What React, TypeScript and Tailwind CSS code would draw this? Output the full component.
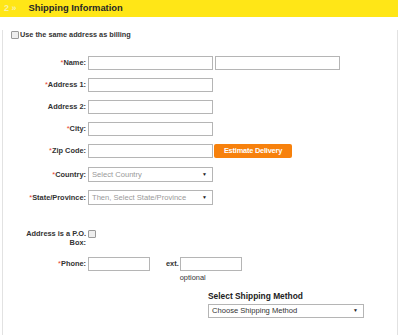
import React from 'react';

const font = { fontFamily: '"Liberation Sans", Arial, sans-serif' };

function Req() {
  return <span className="text-[#e8412c] font-normal">*</span>;
}

function Box() {
  return <div className="w-[8px] h-[8px] border border-[#9a9a9a] bg-[#eeeeee] rounded-[1px]" />;
}

function Field({ label, req, children, className = '' }: { label: string; req?: boolean; children: React.ReactNode; className?: string }) {
  return (
    <div className={`flex items-center ${className}`}>
      <div className="w-[83px] text-right font-bold text-[7.4px] text-[#333]">
        {req && <Req />}
        {label}
      </div>
      <div className="ml-[2px] flex items-center">{children}</div>
    </div>
  );
}

function Input({ w }: { w: string }) {
  return <div className={`${w} h-[14px] border border-[#b5b5b5] bg-white`} />;
}

function Select({ w, text }: { w: string; text: string }) {
  return (
    <div className={`${w} h-[15px] border border-[#b5b5b5] bg-white flex items-center justify-between pl-[3px] pr-[5px]`}>
      <span className="text-[7.6px] text-[#999]">{text}</span>
      <span className="text-[5px] text-[#222]">▼</span>
    </div>
  );
}

export default function App() {
  return (
    <div className="w-[400px] h-[335px] bg-white" style={font}>
      <div className="w-[398px] h-[17px] bg-[#ffe617] flex items-center">
        <span className="ml-[4px] text-[9px] font-bold text-[#f8f1a8]">2 »</span>
        <span className="ml-[12px] text-[9.4px] font-bold text-[#262626]">Shipping Information</span>
      </div>
      <div className="ml-[2px] w-[396px] h-[315px] border-l border-r border-b border-[#e2e2e2]">
        <div className="flex items-center gap-[1px] ml-[8px] mt-[13px] text-[7.3px] font-bold text-[#333]">
          <Box />
          <span>Use the same address as billing</span>
        </div>

        <Field label="Name:" req className="mt-[15px]">
          <Input w="w-[125px]" />
          <div className="ml-[2px]">
            <Input w="w-[125px]" />
          </div>
        </Field>
        <Field label="Address 1:" req className="mt-[8px]">
          <Input w="w-[125px]" />
        </Field>
        <Field label="Address 2:" className="mt-[8px]">
          <Input w="w-[125px]" />
        </Field>
        <Field label="City:" req className="mt-[8px]">
          <Input w="w-[125px]" />
        </Field>
        <Field label="Zip Code:" req className="mt-[8px]">
          <Input w="w-[125px]" />
          <div className="ml-[1px] w-[78px] h-[14px] bg-[#f7810c] rounded-[2px] flex items-center justify-center text-white font-bold text-[7.4px] tracking-[-0.2px]">
            Estimate Delivery
          </div>
        </Field>
        <Field label="Country:" req className="mt-[9px]">
          <Select w="w-[125px]" text="Select Country" />
        </Field>
        <Field label="State/Province:" req className="mt-[8px]">
          <Select w="w-[125px]" text="Then, Select State/Province" />
        </Field>

        <div className="flex items-start mt-[24px]">
          <div className="w-[83px] text-right font-bold text-[7.4px] text-[#333] leading-[9px]">
            Address is a P.O.
            <br />
            Box:
          </div>
          <div className="ml-[2px] mt-[1px]">
            <Box />
          </div>
        </div>

        <div className="flex items-start mt-[10px]">
          <div className="w-[83px] h-[14px] flex items-center justify-end font-bold text-[7.4px] text-[#333]">
            <Req />
            Phone:
          </div>
          <div className="ml-[2px]">
            <Input w="w-[62px]" />
          </div>
          <div className="ml-[16px] h-[14px] flex items-center font-bold text-[7.4px] text-[#333]">ext.</div>
          <div className="ml-[1px] flex flex-col">
            <Input w="w-[62px]" />
            <span className="text-[7.4px] text-[#333] leading-[9px] mt-[2px]">optional</span>
          </div>
        </div>

        <div className="ml-[205px] mt-[9px]">
          <div className="font-bold text-[8.4px] text-[#222] leading-[11px]">Select Shipping Method</div>
          <div className="mt-[2px] w-[156px] h-[14px] border border-[#b5b5b5] bg-white flex items-center justify-between pl-[3px] pr-[5px]">
            <span className="text-[7.6px] text-[#333]">Choose Shipping Method</span>
            <span className="text-[5px] text-[#222]">▼</span>
          </div>
        </div>
      </div>
    </div>
  );
}
